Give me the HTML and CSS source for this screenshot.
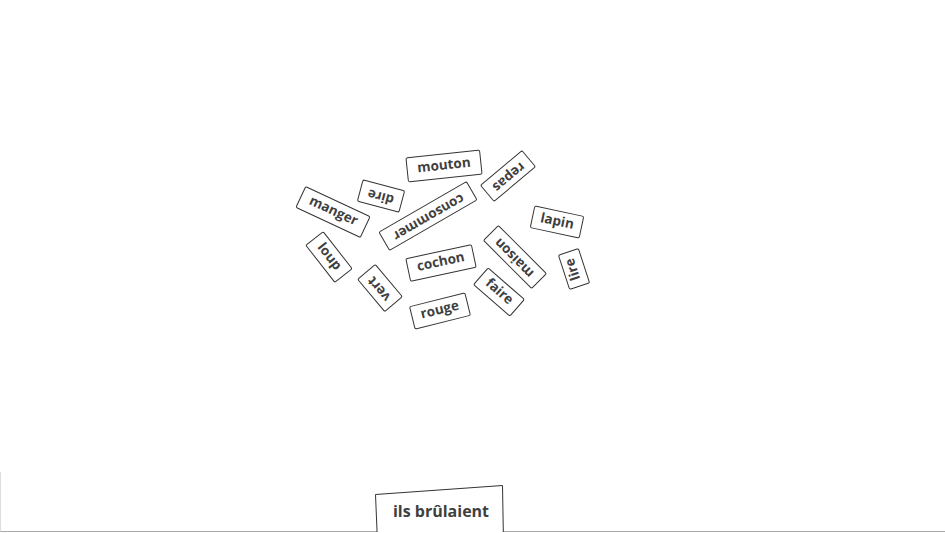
FILE: index.html
```html
<!DOCTYPE html>
<html lang="fr">
<head>
    <meta charset="UTF-8">
    <meta name="viewport" content="width=device-width, initial-scale=1.0">
    <title>Mots</title>
    <link rel="stylesheet" href="styles.css">
</head>
<body>
    <div class="page">
        <!-- words scattered on the table -->
        <div class="board">
            <div class="word w-mouton">mouton</div>
            <div class="word w-repas">repas</div>
            <div class="word w-dire">dire</div>
            <div class="word w-manger">manger</div>
            <div class="word w-consommer">consommer</div>
            <div class="word w-lapin">lapin</div>
            <div class="word w-loup">loup</div>
            <div class="word w-vert">vert</div>
            <div class="word w-cochon">cochon</div>
            <div class="word w-rouge">rouge</div>
            <div class="word w-maison">maison</div>
            <div class="word w-faire">faire</div>
            <div class="word w-lire">lire</div>
        </div>

        <!-- answer tray -->
        <div class="tray">
            <div class="answer">
                <svg class="answer-frame" width="140" height="62" viewBox="0 0 140 62">
                    <polygon points="5.5,14.5 132.5,5.5 133.5,62 7.5,62" fill="#fff" stroke="#333" stroke-width="1"/>
                </svg>
                <span class="answer-text">ils brûlaient</span>
            </div>
        </div>
    </div>
</body>
</html>
```

FILE: styles.css
```css
* {
    box-sizing: border-box;
}
body {
    margin: 0;
    background: #fff;
    font-family: 'Open Sans', 'DejaVu Sans', sans-serif;
    overflow: hidden;
}
.page {
    display: flex;
    flex-direction: column;
    width: 945px;
    height: 533px;
}
.board {
    position: relative;
    flex: 1;
}
.word {
    position: absolute;
    display: flex;
    align-items: center;
    justify-content: center;
    height: 23px;
    border: 1px solid #333;
    border-radius: 2px;
    background: #fff;
    color: #3f3f3f;
    font-size: 13.5px;
    font-weight: 700;
    line-height: 1;
    padding-bottom: 2px;
    transform: translate(-50%, -50%) rotate(var(--r));
}
.w-mouton { left: 444px; top: 166px; width: 75px; height: 25px; --r: -6deg; }
.w-repas { left: 508px; top: 176px; width: 55px; height: 22px; --r: 140deg; }
.w-dire { left: 381px; top: 196px; width: 44px; --r: 195deg; }
.w-manger { left: 333px; top: 212px; width: 72px; height: 24px; --r: 25deg; }
.w-consommer { left: 428px; top: 216px; width: 102px; height: 22px; --r: 150deg; }
.w-lapin { left: 557px; top: 222px; width: 51px; --r: 12deg; }
.w-loup { left: 329px; top: 257px; width: 48px; --r: 52deg; }
.w-vert { left: 380px; top: 288px; width: 43px; height: 24px; --r: 230deg; }
.w-cochon { left: 441px; top: 263px; width: 68px; height: 24px; --r: -12deg; }
.w-rouge { left: 440px; top: 311px; width: 58px; height: 24px; --r: -14deg; }
.w-maison { left: 515px; top: 257px; width: 69px; height: 22px; --r: 225deg; }
.w-faire { left: 499px; top: 292px; width: 49px; --r: 41deg; }
.w-lire { left: 574px; top: 269px; width: 37px; height: 22px; --r: -108deg; }

.tray {
    position: relative;
    height: 60px;
    border-left: 1px solid #ddd;
    border-bottom: 1px solid #aaa;
    margin-bottom: 1px;
}
.answer {
    position: absolute;
    left: 369px;
    top: 8px;
    width: 140px;
    height: 52px;
    overflow: hidden;
}
.answer-frame {
    position: absolute;
    left: 0;
    top: 0;
}
.answer-text {
    position: absolute;
    left: 2px;
    right: 0;
    top: 19px;
    text-align: center;
    color: #3f3f3f;
    font-size: 16px;
    font-weight: 700;
    line-height: 24px;
}
```
